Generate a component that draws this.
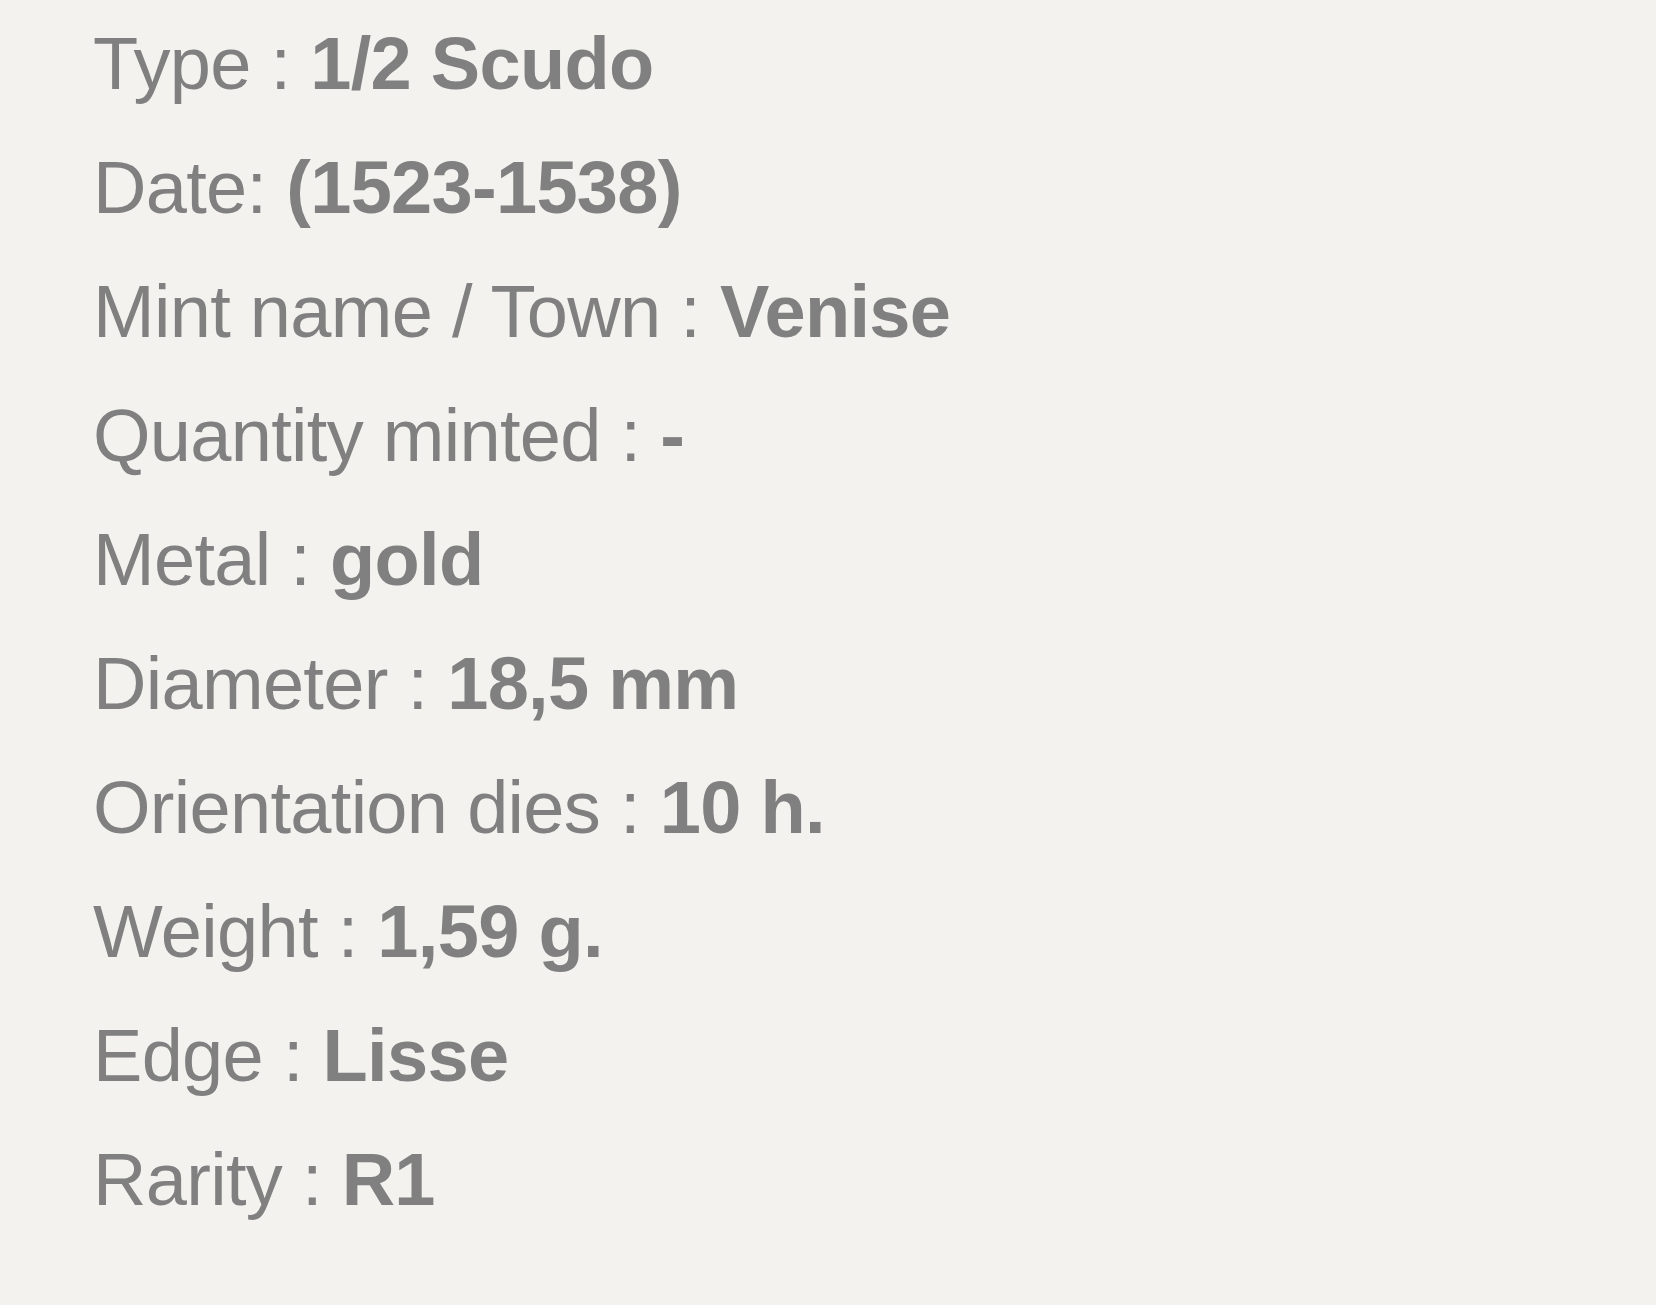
import React from 'react';

const rows: { label: string; value: string }[] = [
    { label: 'Type : ', value: '1/2 Scudo' },
    { label: 'Date: ', value: '(1523-1538)' },
    { label: 'Mint name / Town : ', value: 'Venise' },
    { label: 'Quantity minted : ', value: '-' },
    { label: 'Metal : ', value: 'gold' },
    { label: 'Diameter : ', value: '18,5 mm' },
    { label: 'Orientation dies : ', value: '10 h.' },
    { label: 'Weight : ', value: '1,59 g.' },
    { label: 'Edge : ', value: 'Lisse' },
    { label: 'Rarity : ', value: 'R1' },
];

const App: React.FC = () => {
    return (
        <div className="min-h-screen w-full bg-[#f3f2ef] pl-[93px] pt-[2px] font-['Liberation_Sans',Arial,sans-serif] text-[74px] leading-[124px] tracking-[-0.7px] text-[#808080]">
            {rows.map(row => (
                <div key={row.label} className="whitespace-pre">
                    {row.label}
                    <span className="font-bold">{row.value}</span>
                </div>
            ))}
        </div>
    );
};

export default App;
